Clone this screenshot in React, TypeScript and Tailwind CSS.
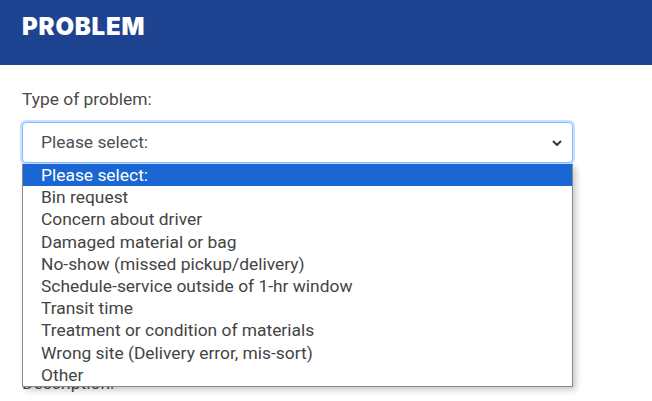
import React from "react";

const options = [
  "Please select:",
  "Bin request",
  "Concern about driver",
  "Damaged material or bag",
  "No-show (missed pickup/delivery)",
  "Schedule-service outside of 1-hr window",
  "Transit time",
  "Treatment or condition of materials",
  "Wrong site (Delivery error, mis-sort)",
  "Other",
];

export default function App() {
  return (
    <div className="w-[652px] h-[401px] bg-white overflow-hidden" style={{ fontFamily: "Roboto, 'Liberation Sans', sans-serif" }}>
      <div className="h-[65px] bg-[#1e4391] px-[22px] pt-[13px]">
        <h1 className="text-white text-[24px] leading-[28px] font-black tracking-[0.8px]" style={{ fontFamily: "Inter, 'Liberation Sans', sans-serif" }}>
          PROBLEM
        </h1>
      </div>
      <div className="px-[22px] pt-[22px]">
        <label className="block text-[17.4px] leading-[24px] text-[#4a4a4a]">Type of problem:</label>
        <div className="relative mt-[11px] w-[551px]">
          <div className="h-[41px] rounded-[4px] border border-[#80bdff] shadow-[0_0_0_2px_rgba(0,123,255,0.22)] bg-white flex items-center justify-between pl-[18px] pr-[8px]">
            <span className="text-[17.4px] text-[#495057]">Please select:</span>
            <svg width="12" height="12" viewBox="0 0 12 12" className="mr-[1px]">
              <path d="M2.5 4.5 L6 8 L9.5 4.5" fill="none" stroke="#343a40" strokeWidth="2" strokeLinecap="round" strokeLinejoin="round" />
            </svg>
          </div>
          <div className="absolute left-0 top-[42px] w-[551px] bg-white border border-t-0 border-[#8a8a8a] shadow-[3px_3px_6px_rgba(0,0,0,0.22)] z-10">
            {options.map((o, i) => (
              <div
                key={o}
                className={
                  "h-[22.2px] leading-[22px] pl-[18px] text-[17.4px] " +
                  (i === 0 ? "bg-[#1a66d2] text-white" : "text-[#444444]")
                }
              >
                {o}
              </div>
            ))}
          </div>
          <label className="block mt-[208px] text-[17.4px] leading-[24px] text-[#4a4a4a]">Description:</label>
        </div>
      </div>
    </div>
  );
}
